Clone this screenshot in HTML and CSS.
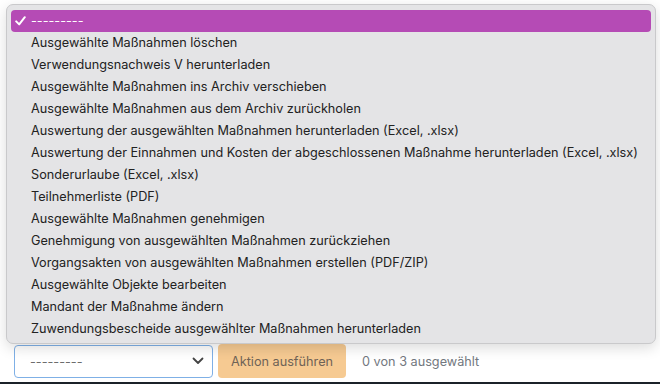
FILE: index.html
```html
<!DOCTYPE html>
<html lang="de">
<head>
<meta charset="utf-8">
<title>Aktionen</title>
<link rel="stylesheet" href="styles.css">
</head>
<body>
<div class="page">
  <div class="toolbar">
    <div class="select">
      <span class="placeholder">---------</span>
      <svg class="chevron" width="12" height="8" viewBox="0 0 12 8"><path d="M1.5 1.5 L6 6 L10.5 1.5" fill="none" stroke="#444" stroke-width="1.8" stroke-linecap="round" stroke-linejoin="round"/></svg>
    </div>
    <button class="run">Aktion ausführen</button>
    <span class="count">0 von 3 ausgewählt</span>
  </div>
  <div class="menu">
    <div class="item selected"><svg class="check" width="11" height="10" viewBox="0 0 11 10"><path d="M1.2 5.4 L4.2 8.4 L9.8 1.2" fill="none" stroke="#fff" stroke-width="2" stroke-linecap="round" stroke-linejoin="round"/></svg>---------</div>
    <div class="item">Ausgewählte Maßnahmen löschen</div>
    <div class="item">Verwendungsnachweis V herunterladen</div>
    <div class="item">Ausgewählte Maßnahmen ins Archiv verschieben</div>
    <div class="item">Ausgewählte Maßnahmen aus dem Archiv zurückholen</div>
    <div class="item">Auswertung der ausgewählten Maßnahmen herunterladen (Excel, .xlsx)</div>
    <div class="item">Auswertung der Einnahmen und Kosten der abgeschlossenen Maßnahme herunterladen (Excel, .xlsx)</div>
    <div class="item">Sonderurlaube (Excel, .xlsx)</div>
    <div class="item">Teilnehmerliste (PDF)</div>
    <div class="item">Ausgewählte Maßnahmen genehmigen</div>
    <div class="item">Genehmigung von ausgewählten Maßnahmen zurückziehen</div>
    <div class="item">Vorgangsakten von ausgewählten Maßnahmen erstellen (PDF/ZIP)</div>
    <div class="item">Ausgewählte Objekte bearbeiten</div>
    <div class="item">Mandant der Maßnahme ändern</div>
    <div class="item">Zuwendungsbescheide ausgewählter Maßnahmen herunterladen</div>
  </div>
</div>
<div class="strip"></div>
</body>
</html>
```
FILE: styles.css
```css
html, body {
  margin: 0;
  padding: 0;
  width: 660px;
  height: 384px;
  overflow: hidden;
  background: #ffffff;
  font-family: Inter, "Liberation Sans", Arial, sans-serif;
  font-size: 12.7px;
}
.page {
  position: relative;
  height: 382px;
  display: flex;
  flex-direction: column;
  justify-content: flex-end;
}
.toolbar {
  display: flex;
  align-items: center;
  padding: 0 0 4px 14px;
}
.select {
  box-sizing: border-box;
  width: 199px;
  height: 33px;
  border: 1px solid #7fb0e6;
  border-radius: 4px;
  background: #fff;
  display: flex;
  align-items: center;
  justify-content: space-between;
  padding: 0 8px 0 15px;
}
.placeholder {
  color: #6c6c6c;
}
.run {
  box-sizing: border-box;
  margin-left: 5px;
  width: 128px;
  height: 34px;
  border: none;
  border-radius: 4px;
  background: #f6ca92;
  color: #6f6357;
  font-family: inherit;
  font-size: 12.7px;
  padding: 0;
}
.count {
  margin-left: 16px;
  color: #737880;
}
.menu {
  position: absolute;
  left: 6px;
  top: 4px;
  box-sizing: border-box;
  width: 650px;
  height: 340px;
  background: #e4e4e6;
  border: 1px solid #c9c9cb;
  border-radius: 7px;
  box-shadow: 0 4px 14px rgba(0,0,0,0.14);
  padding: 5px 4px;
}
.item {
  height: 22px;
  line-height: 22px;
  padding-left: 20px;
  color: #222;
  white-space: nowrap;
  position: relative;
}
.item.selected {
  background: #b54bb5;
  color: #fff;
  border-radius: 4px;
}
.check {
  position: absolute;
  left: 4px;
  top: 6px;
}
.strip {
  height: 2px;
  background: #1b2229;
}
```
